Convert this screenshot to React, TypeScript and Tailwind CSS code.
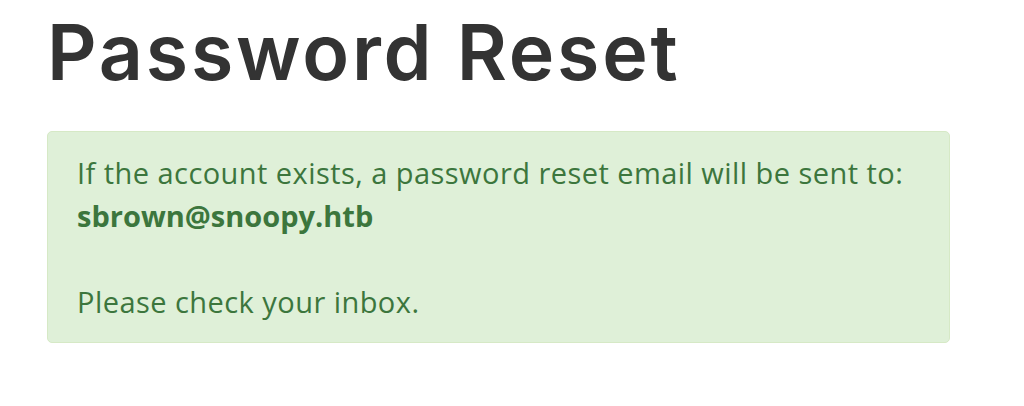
export default function App() {
  return (
    <div className="min-h-[406px] w-[1024px] bg-white pl-[47px] pt-[6px]">
      <h1 className="font-['Inter',sans-serif] text-[77px] font-semibold leading-[92px] tracking-[2.8px] text-[#333333]">
        Password Reset
      </h1>
      <div className="mt-[33px] w-[903px] rounded-[5px] border border-[#d6e9c6] bg-[#dff0d8] px-[29px] py-[19px] font-['Open_Sans',sans-serif] text-[29px] leading-[43px] tracking-[0.45px] text-[#3c763d]">
        <p>If the account exists, a password reset email will be sent to:</p>
        <p className="font-bold tracking-normal">sbrown@snoopy.htb</p>
        <p>&nbsp;</p>
        <p>Please check your inbox.</p>
      </div>
    </div>
  );
}
